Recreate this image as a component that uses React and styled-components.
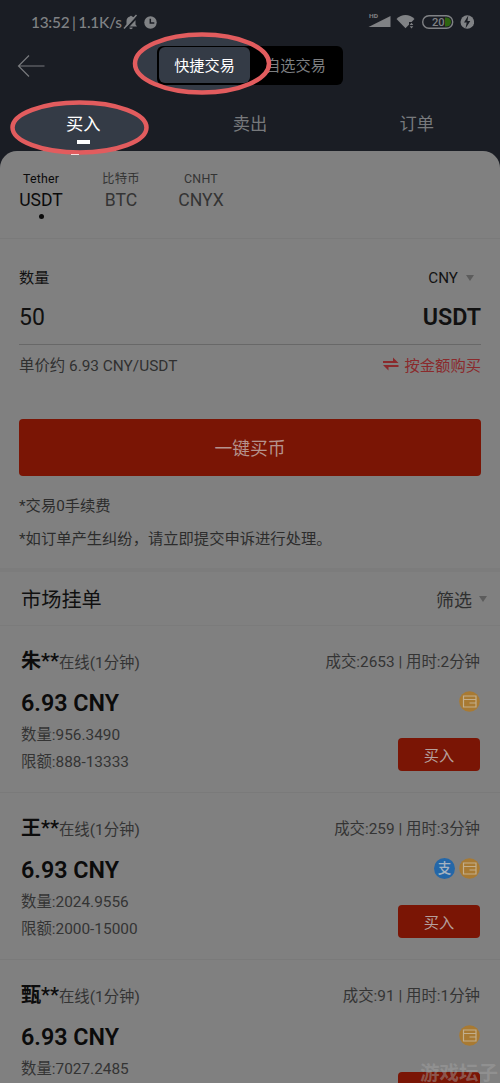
import React from "react";
import styled, { createGlobalStyle } from "styled-components";

const GlobalStyle = createGlobalStyle`
  * {
    box-sizing: border-box;
  }

  body {
    margin: 0;
    background: #808080;
    font-family: Roboto, "Noto Sans CJK SC", sans-serif;
  }

  p,
  h2 {
    margin: 0;
    font-weight: 400;
  }

  button {
    font-family: inherit;
    border: none;
    padding: 0;
  }
`;

const Screen = styled.div`
  position: relative;
  width: 500px;
  height: 1083px;
  overflow: hidden;
  background: #1a1d24;
`;

const Overlay = styled.svg`
  position: absolute;
  top: 0;
  left: 0;
  z-index: ${(props) => props.$level};
  pointer-events: none;
`;

const Header = styled.header`
  position: relative;
  z-index: 1;
`;

const StatusBar = styled.div`
  display: flex;
  align-items: center;
  justify-content: space-between;
  height: 44px;
  padding: 0 26px 0 31px;
  color: #808285;
`;

const StatusGroup = styled.div`
  display: flex;
  align-items: center;
  font-family: Lato, sans-serif;
  font-size: 15.4px;
  font-weight: 500;
  letter-spacing: -0.25px;
  word-spacing: -1px;
  white-space: nowrap;

  span {
    width: 92px;
  }

  svg + svg {
    margin-left: 5px;
  }
`;

const NavBar = styled.div`
  display: flex;
  align-items: center;
  height: 43px;
  padding-left: 17px;
`;

const Switch = styled.div`
  display: flex;
  width: 186px;
  height: 39px;
  margin-left: 112px;
  padding: 1px 1px 2px 2px;
  border-radius: 6px;
  background: #000;
`;

const SwitchItem = styled.div`
  width: 91px;
  height: 36px;
  border-radius: 6px;
  text-align: center;
  font-size: 15.2px;
  line-height: 38px;
  color: ${(props) => (props.$active ? "#fff" : "#7d7f81")};
  background: ${(props) => (props.$active ? "#343b46" : "transparent")};
`;

const Tabs = styled.div`
  display: grid;
  grid-template-columns: repeat(3, 1fr);
  height: 64px;
  padding-top: 22px;
`;

const Tab = styled.div`
  display: flex;
  flex-direction: column;
  align-items: center;
  font-size: 17.3px;
  line-height: 30px;
  color: ${(props) => (props.$active ? "#fff" : "#77797c")};

  &::after {
    content: "";
    width: 13px;
    height: 4px;
    margin-top: 1px;
    background: ${(props) => (props.$active ? "#fff" : "transparent")};
  }
`;

const Card = styled.main`
  position: relative;
  height: 932px;
  overflow: hidden;
  border-radius: 17px 17px 0 0;
  background: #808080;
`;

const CoinTabs = styled.div`
  display: flex;
  height: 88px;
  padding: 18px 0 0 1px;
  border-bottom: 1px solid #7a7a7a;
`;

const Coin = styled.div`
  display: flex;
  flex-direction: column;
  align-items: center;
  width: 80px;
  color: ${(props) => (props.$active ? "#0b0b0b" : "#343434")};

  small {
    font-size: 12.4px;
    line-height: 20px;
    letter-spacing: 0.2px;
  }

  span {
    font-size: 17.6px;
    line-height: 23px;
  }

  &::after {
    content: "";
    width: 5px;
    height: 5px;
    margin-top: 2px;
    border-radius: 50%;
    background: ${(props) => (props.$active ? "#0b0b0b" : "transparent")};
  }
`;

const Form = styled.section`
  height: 329px;
  padding: 24px 19px 0;
`;

const Row = styled.div`
  display: flex;
  align-items: center;
  justify-content: space-between;
`;

const LabelRow = styled(Row)`
  height: 30px;
  padding-right: 7px;
  font-size: 15.2px;
  color: #121212;

  > span {
    padding-bottom: 4px;
  }
`;

const Select = styled.div`
  display: flex;
  align-items: center;
  gap: ${(props) => props.$gap}px;

  &::after {
    content: "";
    border: 4.5px solid transparent;
    border-top: 6px solid #5c5c5c;
    border-bottom: none;
  }
`;

const AmountRow = styled(Row)`
  height: 52px;
  padding-bottom: 3px;
  border-bottom: 1px solid #686868;
  font-size: 23px;
  color: #111;

  strong {
    font-size: 23.3px;
    font-weight: 600;
  }
`;

const HintRow = styled(Row)`
  height: 40px;
  padding-bottom: 2px;
  font-size: 15.4px;
  color: #303030;
`;

const SwapLink = styled.div`
  display: flex;
  align-items: center;
  gap: 6px;
  font-size: 15.3px;
  color: #8a2a2c;
`;

const PrimaryButton = styled.button`
  display: block;
  width: 462px;
  height: 57px;
  margin: 34px 0 14px;
  padding-bottom: 2px;
  border-radius: 4px;
  background: #7a1505;
  color: #b5938e;
  font-size: 17.8px;
`;

const Note = styled.p`
  font-size: 15.3px;
  line-height: 33px;
  color: #2c2c2c;
`;

const MarketHeader = styled(Row)`
  height: 58px;
  padding: 0 13px 0 21px;
  border-top: 4px solid #7c7c7c;
  border-bottom: 1px solid #7b7b7b;
  color: #303030;
  font-size: 18px;

  h2 {
    font-size: 20.2px;
    color: #101010;
  }
`;

const OrderItem = styled.article`
  display: flex;
  justify-content: space-between;
  height: 167px;
  padding: 19px 20px 0 21px;
  border-bottom: 1px solid #7a7a7a;
  font-size: 15.4px;
  color: #343434;
`;

const OrderInfo = styled.div`
  p {
    line-height: 27px;
  }
`;

const Trader = styled.div`
  height: 32px;
  line-height: 32px;

  strong {
    font-size: 20px;
    font-weight: 600;
    color: #0c0c0c;
  }
`;

const Price = styled.div`
  margin: 9px 0 1px;
  font-size: 23.3px;
  font-weight: 600;
  line-height: 35px;
  color: #0b0b0b;
`;

const OrderSide = styled.div`
  display: flex;
  flex-direction: column;
  align-items: flex-end;
`;

const Stats = styled.div`
  height: 34px;
  line-height: 35px;
`;

const Payments = styled.div`
  display: flex;
  gap: 4px;
  height: 21px;
  margin: 12px 0 26px;
`;

const BuyButton = styled.button`
  width: 82px;
  height: 33px;
  padding-bottom: 2px;
  border-radius: 4px;
  background: #7a1505;
  color: #b5a09d;
  font-size: 15.2px;
`;

const AlipayBadge = styled.span`
  width: 21px;
  height: 21px;
  border-radius: 50%;
  background: #2467a8;
  color: #a5b3c1;
  font-size: 13.5px;
  font-weight: 500;
  line-height: 20px;
  text-align: center;
`;

const Watermark = styled.div`
  position: absolute;
  right: 2px;
  bottom: -6px;
  color: rgba(165, 165, 165, 0.45);
  font-size: 19.5px;
  font-weight: 700;
  line-height: 30px;
`;

const BankIcon = () => (
  <svg width="21" height="21" viewBox="0 0 21 21" fill="none">
    <circle cx="10.5" cy="10.5" r="10.3" fill="#a87a33" />
    <path
      d="M4.5 5h12.500v11h-12.500zM4.500 8.500h12.500M10.500 12h6.500"
      stroke="#c2ae8c"
      strokeWidth="1.2"
    />
  </svg>
);

const SwapIcon = () => (
  <svg width="16" height="14" viewBox="0 0 16 14" fill="#8a2a2c">
    <path d="M0 4h10V.5l5.500 5.400H0zM15.500 8H0L5.500 13.500V9.900h10z" />
  </svg>
);

const BackIcon = () => (
  <svg width="28" height="22" viewBox="0 0 28 22" fill="none">
    <path d="M12 .5 1.5 11 12 21.5M1.5 11h26" stroke="#77797c" strokeWidth="1.2" />
  </svg>
);

const MuteIcon = () => (
  <svg width="16" height="16" viewBox="0 0 15 16">
    <path
      d="M1.5 12.5 3 10.5V7c0-2.5 1.5-4 3.5-4.5C6.6 1.4 8.4 1.4 8.5 2.5c2 .5 3.5 2 3.5 4.5v3.5l1.5 2zM5.8 13.5h3.4a1.7 1.7 0 0 1-3.4 0z"
      fill="#808285"
    />
    <path d="M1.5 16 14.5 2" stroke="#1a1d24" strokeWidth="2" />
    <path d="M.5 14.5 13 1" stroke="#808285" strokeWidth="1.5" />
  </svg>
);

const ClockIcon = () => (
  <svg width="13" height="13" viewBox="0 0 13 13" fill="none">
    <circle cx="6.5" cy="6.5" r="6.2" fill="#808285" />
    <path d="M6.3 2.8v4.2h4" stroke="#1a1d24" strokeWidth="1.5" />
  </svg>
);

const StatusIcons = () => (
  <svg width="108" height="20" viewBox="0 0 108 20" fill="#808285">
    <text
      x="3"
      y="6"
      fontFamily="Roboto"
      fontSize="6"
      fontWeight="700"
      textLength="9"
      lengthAdjust="spacingAndGlyphs"
    >
      HD
    </text>
    <path d="M2.5 15 24.5 4v11z" />
    <path d="M30.5 7C35.5 1.8 43.5 1.8 48.5 7L39.5 16.3z" />
    <path d="M43 10h6v8h-6z" fill="#1a1d24" />
    <path d="M43.700 13l1.800-2.200 1.800 2.200zM43.700 14.200l1.800 2.200 1.800-2.200z" />
    <rect
      x="56.7"
      y="3.7"
      width="30"
      height="12.6"
      rx="6.3"
      fill="none"
      stroke="#808285"
      strokeWidth="1.4"
    />
    <path d="M79 5.5h1.500a4.500 4.500 0 0 1 0 9H79z" fill="#2e6410" />
    <text x="66" y="14" fontFamily="Roboto" fontSize="11.2" fontWeight="500">
      20
    </text>
    <circle cx="101.3" cy="10" r="6.8" />
    <path d="M102.300 3.500 98 10.500h2.700L99.500 16.500l4.800-7.500h-2.800z" fill="#1a1d24" />
  </svg>
);

const orders = [
  { name: "朱**", amount: "956.3490", limit: "888-13333", deals: 2653, minutes: 2 },
  { name: "王**", amount: "2024.9556", limit: "2000-15000", deals: 259, minutes: 3, alipay: true },
  { name: "甄**", amount: "7027.2485", deals: 91, minutes: 1 },
];

const Order = ({ order }) => {
  return (
    <OrderItem>
      <OrderInfo>
        <Trader>
          <strong>{order.name}</strong>在线(1分钟)
        </Trader>
        <Price>6.93 CNY</Price>
        <p>数量:{order.amount}</p>
        {order.limit && <p>限额:{order.limit}</p>}
      </OrderInfo>
      <OrderSide>
        <Stats>
          成交:{order.deals} | 用时:{order.minutes}分钟
        </Stats>
        <Payments>
          {order.alipay && <AlipayBadge>支</AlipayBadge>}
          <BankIcon />
        </Payments>
        <BuyButton>{order.limit && "买入"}</BuyButton>
      </OrderSide>
    </OrderItem>
  );
};

const App = () => {
  return (
    <React.Fragment>
      <GlobalStyle />
      <Screen>
        <Overlay $level={0} width="500" height="160">
          <ellipse cx="202" cy="63.5" rx="67" ry="29" fill="#343b46" />
          <ellipse cx="79.5" cy="127.5" rx="67" ry="25" fill="#343b46" />
        </Overlay>
        <Header>
          <StatusBar>
            <StatusGroup>
              <span>13:52 | 1.1K/s</span>
              <MuteIcon />
              <ClockIcon />
            </StatusGroup>
            <StatusIcons />
          </StatusBar>
          <NavBar>
            <BackIcon />
            <Switch>
              <SwitchItem $active>快捷交易</SwitchItem>
              <SwitchItem>自选交易</SwitchItem>
            </Switch>
          </NavBar>
          <Tabs>
            <Tab $active>买入</Tab>
            <Tab>卖出</Tab>
            <Tab>订单</Tab>
          </Tabs>
        </Header>
        <Card>
          <CoinTabs>
            <Coin $active>
              <small>Tether</small>
              <span>USDT</span>
            </Coin>
            <Coin>
              <small>比特币</small>
              <span>BTC</span>
            </Coin>
            <Coin>
              <small>CNHT</small>
              <span>CNYX</span>
            </Coin>
          </CoinTabs>
          <Form>
            <LabelRow>
              <span>数量</span>
              <Select $gap={8}>CNY</Select>
            </LabelRow>
            <AmountRow>
              <span>50</span>
              <strong>USDT</strong>
            </AmountRow>
            <HintRow>
              <span>单价约 6.93 CNY/USDT</span>
              <SwapLink>
                <SwapIcon />
                按金额购买
              </SwapLink>
            </HintRow>
            <PrimaryButton>一键买币</PrimaryButton>
            <Note>*交易0手续费</Note>
            <Note>*如订单产生纠纷，请立即提交申诉进行处理。</Note>
          </Form>
          <MarketHeader>
            <h2>市场挂单</h2>
            <Select $gap={7}>筛选</Select>
          </MarketHeader>
          {orders.map((order) => (
            <Order key={order.name} order={order} />
          ))}
        </Card>
        <Overlay $level={2} width="500" height="160" fill="none" stroke="#e25c5e" strokeWidth="4.5">
          <ellipse cx="202" cy="63.5" rx="67" ry="29" />
          <ellipse cx="79.5" cy="127.5" rx="67" ry="25" />
          <path d="M71 154.500h8" stroke="#f3dede" strokeWidth="1" />
        </Overlay>
        <Watermark>游戏坛子</Watermark>
      </Screen>
    </React.Fragment>
  );
};

export default App;
